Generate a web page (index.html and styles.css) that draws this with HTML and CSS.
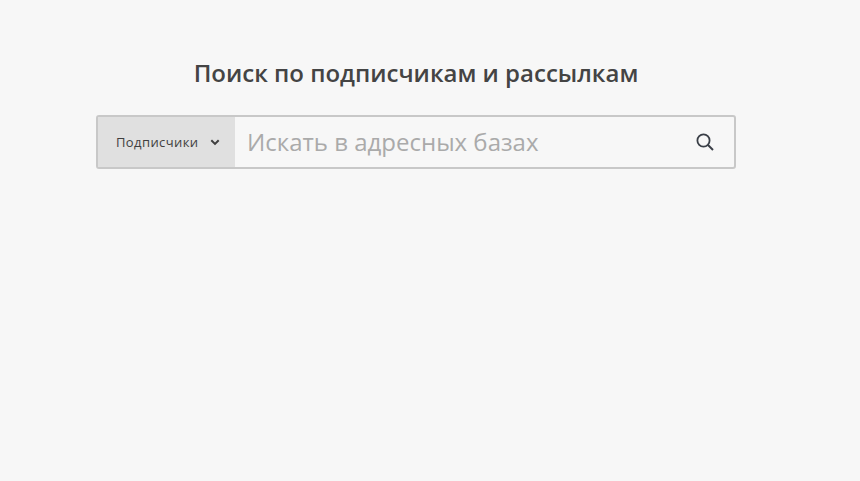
FILE: index.html
```html
<!DOCTYPE html>
<html lang="ru">
<head>
<meta charset="utf-8">
<title>Поиск</title>
<link rel="stylesheet" href="styles.css">
</head>
<body>
<main class="page">
  <h1 class="title">Поиск по подписчикам и рассылкам</h1>
  <form class="search">
    <button type="button" class="scope">
      <span>Подписчики</span>
      <svg class="chev" width="10" height="7" viewBox="0 0 10 7"><path d="M1.3 1.2 5 4.9l3.7-3.7" fill="none" stroke="#3f3f3f" stroke-width="2"/></svg>
    </button>
    <input class="query" type="text" placeholder="Искать в адресных базах">
    <svg class="glass" width="20" height="20" viewBox="0 0 20 20"><circle cx="8.5" cy="8.5" r="6.1" fill="none" stroke="#3a3f47" stroke-width="1.8"/><path d="M13 13l5 5" stroke="#3a3f47" stroke-width="2" fill="none"/></svg>
  </form>
</main>
</body>
</html>
```
FILE: styles.css
```css
* { box-sizing: border-box; }
html, body { margin: 0; height: 100%; }
body { background: #f7f7f7; font-family: "Open Sans", sans-serif; color: #444; overflow: hidden; }
.page { width: 640px; margin-left: 96px; padding-top: 55px; }
.title { margin: 0 0 25px; font-size: 24px; line-height: 35px; font-weight: 600; text-align: center; }
.search { display: flex; align-items: center; height: 54px; border: 2px solid #c8c8c8; border-radius: 3px; background: #f7f7f7; }
.scope { display: flex; align-items: center; justify-content: space-between; width: 137px; height: 100%; padding: 0 15px 0 18px; border: 0; background: #e0e0e0; font: 13px "Open Sans", sans-serif; letter-spacing: 0.4px; color: #3f3f3f; }
.query { flex: 1; min-width: 0; height: 100%; padding: 0 12px 2px; border: 0; background: transparent; font: 24px "Open Sans", sans-serif; outline: 0; }
.query::placeholder { color: #aaa; opacity: 1; }
.glass { margin-right: 19px; margin-bottom: 1px; flex: none; }
```
